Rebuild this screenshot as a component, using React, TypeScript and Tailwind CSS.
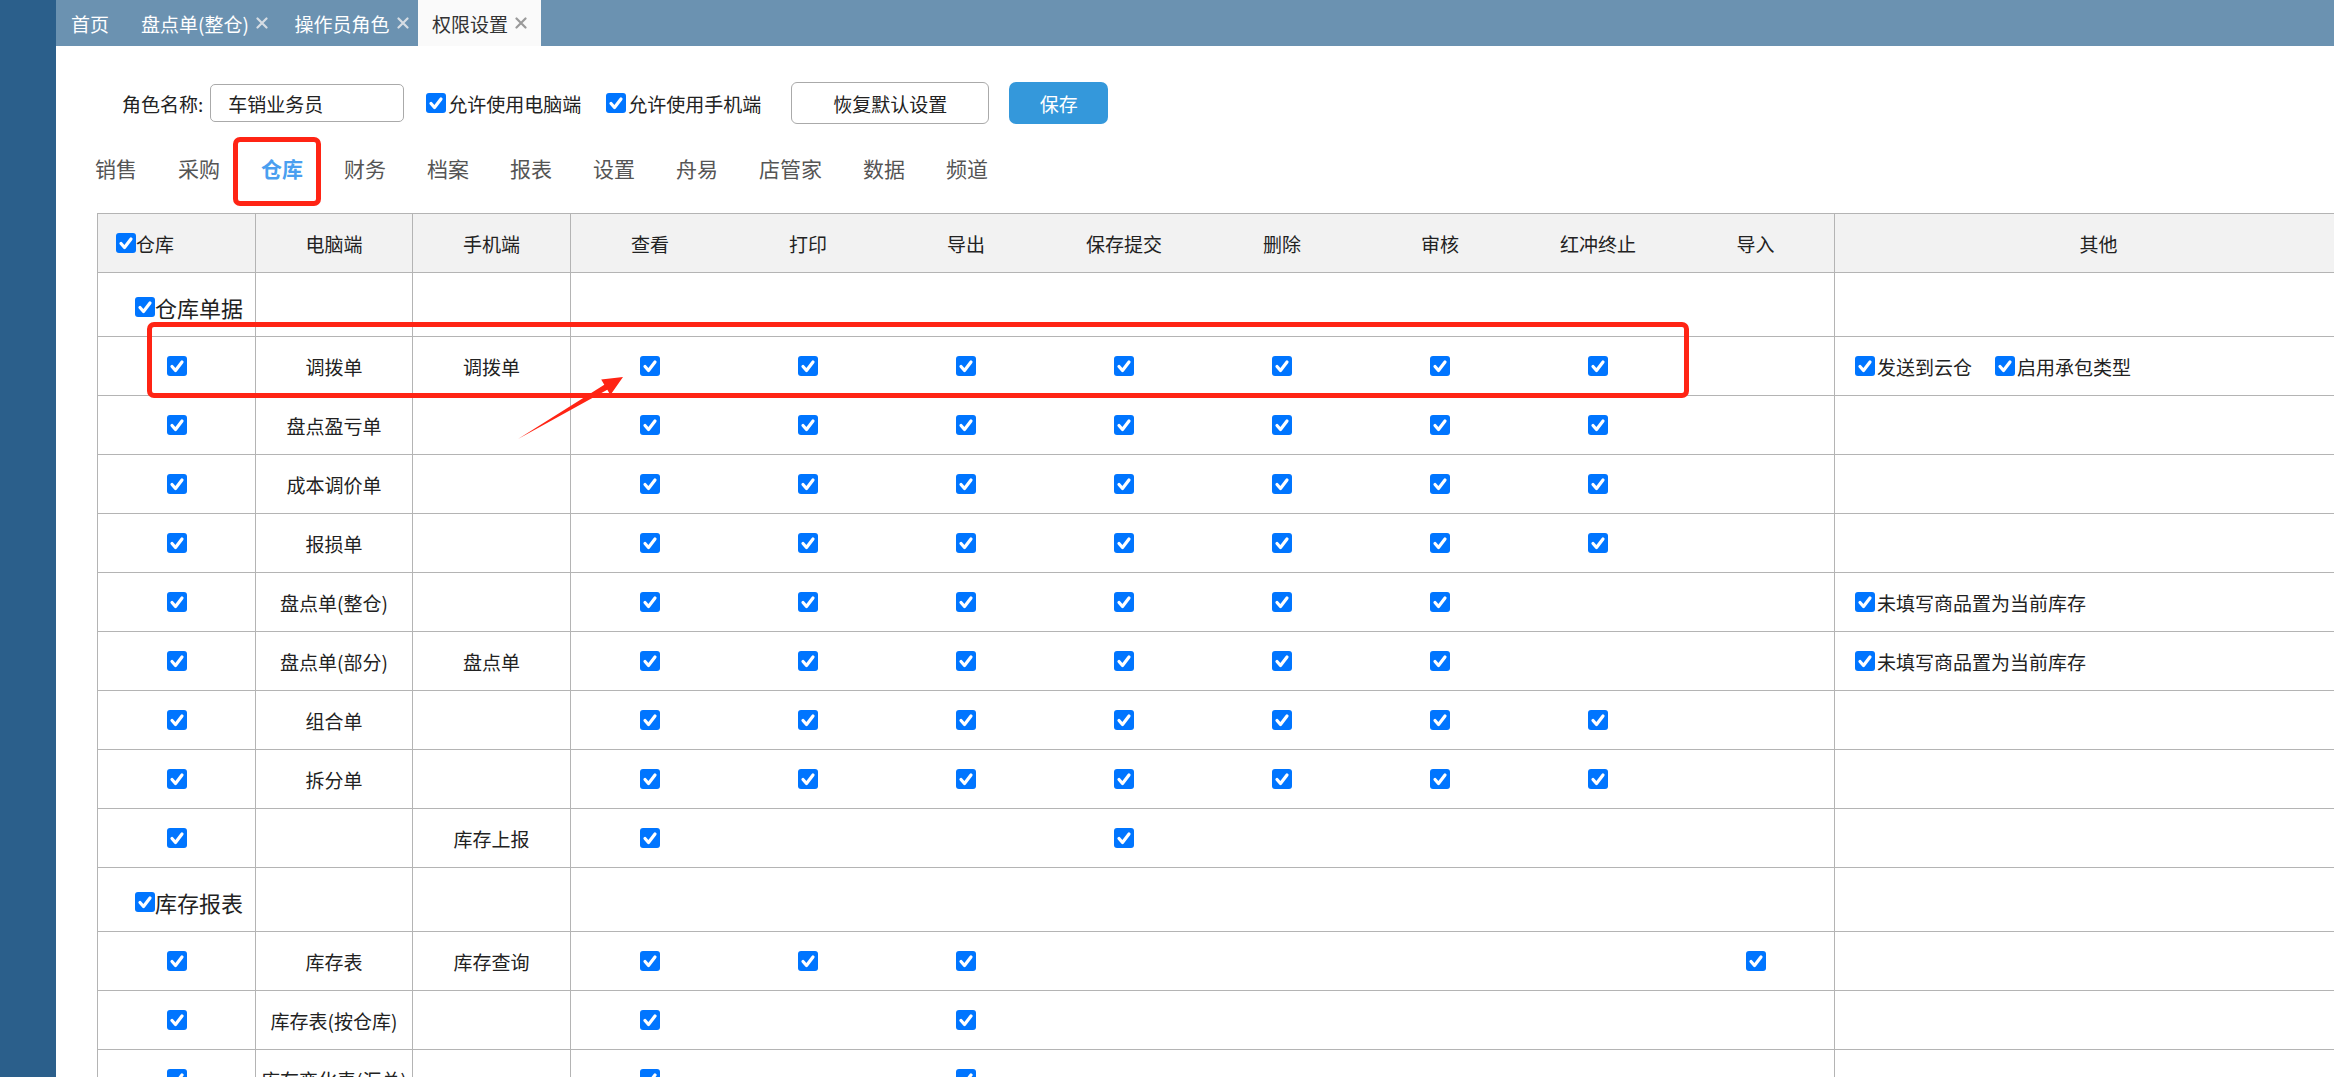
import React from 'react';

type Row = { pc: string; mobile: string; perms: string; other?: string[] };
type Group = { title: string; rows: Row[] };

const tabs = [
  { label: '首页', w: 'w-[68px]', close: false, active: false },
  { label: '盘点单(整仓)', w: 'w-[161px]', close: true, active: false },
  { label: '操作员角色', w: 'w-[133px]', close: true, active: false },
  { label: '权限设置', w: 'w-[123px]', close: true, active: true },
];

const navItems = ['销售', '采购', '仓库', '财务', '档案', '报表', '设置', '舟易', '店管家', '数据', '频道'];

const actions = ['查看', '打印', '导出', '保存提交', '删除', '审核', '红冲终止', '导入'];

const groups: Group[] = [
  {
    title: '仓库单据',
    rows: [
      { pc: '调拨单', mobile: '调拨单', perms: '11111110', other: ['发送到云仓', '启用承包类型'] },
      { pc: '盘点盈亏单', mobile: '', perms: '11111110' },
      { pc: '成本调价单', mobile: '', perms: '11111110' },
      { pc: '报损单', mobile: '', perms: '11111110' },
      { pc: '盘点单(整仓)', mobile: '', perms: '11111100', other: ['未填写商品置为当前库存'] },
      { pc: '盘点单(部分)', mobile: '盘点单', perms: '11111100', other: ['未填写商品置为当前库存'] },
      { pc: '组合单', mobile: '', perms: '11111110' },
      { pc: '拆分单', mobile: '', perms: '11111110' },
      { pc: '', mobile: '库存上报', perms: '10010000' },
    ],
  },
  {
    title: '库存报表',
    rows: [
      { pc: '库存表', mobile: '库存查询', perms: '11100001' },
      { pc: '库存表(按仓库)', mobile: '', perms: '10100000' },
      { pc: '库存变化表(汇总)', mobile: '', perms: '10100000' },
    ],
  },
];

function Check() {
  return (
    <span className="inline-flex h-5 w-5 shrink-0 items-center justify-center rounded-[3px] bg-[#0075ff]">
      <svg viewBox="0 0 20 20" className="h-5 w-5" fill="none" stroke="white" strokeWidth={3.2} strokeLinecap="round" strokeLinejoin="round">
        <path d="M5 10.5l3.5 4 6.5-8.5" />
      </svg>
    </span>
  );
}

function CloseX({ color }: { color: string }) {
  return (
    <svg viewBox="0 0 12 12" className="ml-[7px] h-[12px] w-[12px]" stroke={color} strokeWidth={2.2} strokeLinecap="round">
      <path d="M1.5 1.5l9 9M10.5 1.5l-9 9" />
    </svg>
  );
}

export default function App() {
  return (
    <div className="relative flex h-screen w-screen overflow-hidden bg-white font-['Noto_Sans_CJK_SC',sans-serif] text-[#222]">
      <aside className="w-[56px] shrink-0 bg-[#2b5f8b]" />

      <div className="flex min-w-0 flex-1 flex-col overflow-hidden">
        {/* tab bar */}
        <div className="flex h-[46px] shrink-0 bg-[#6b92b1]">
          {tabs.map((t) => (
            <div
              key={t.label}
              className={`flex ${t.w} items-center justify-center text-[19px] leading-none ${
                t.active ? 'bg-[#fafafa] text-[#333]' : 'text-white'
              }`}
            >
              <span>{t.label}</span>
              {t.close && <CloseX color={t.active ? '#9a9a9a' : '#d6dde4'} />}
            </div>
          ))}
        </div>

        <div className="flex-1 pl-[41px]">
          {/* role row */}
          <div className="ml-[25px] mt-[36px] flex h-[42px] items-center">
            <span className="text-[19px] leading-none">角色名称:</span>
            <div className="ml-[7px] flex h-[38px] w-[194px] items-center rounded-[5px] border border-[#aaa] pl-[17px] text-[19px] leading-none">
              车销业务员
            </div>
            <label className="ml-[22px] flex items-center">
              <Check />
              <span className="ml-[2px] text-[19px] leading-none">允许使用电脑端</span>
            </label>
            <label className="ml-[25px] flex items-center">
              <Check />
              <span className="ml-[2px] text-[19px] leading-none">允许使用手机端</span>
            </label>
            <button type="button" className="ml-[30px] flex h-[42px] w-[198px] items-center justify-center rounded-[6px] border border-[#aaa] bg-white text-[19px] leading-none">
              恢复默认设置
            </button>
            <button type="button" className="ml-[20px] flex h-[42px] w-[99px] items-center justify-center rounded-[7px] bg-[#3498db] text-[19px] leading-none text-white">
              保存
            </button>
          </div>

          {/* module nav */}
          <div className="-ml-[2px] mt-[24px] flex h-[40px] items-center gap-[41px]">
            {navItems.map((n) => (
              <span
                key={n}
                className={`text-[21px] leading-none ${n === '仓库' ? 'font-bold text-[#4a9ff0]' : 'text-[#555]'}`}
              >
                {n}
              </span>
            ))}
          </div>

          {/* permission table */}
          <div className="mt-[25px] w-[2266px] border-l border-[#b4b4b4] text-[19px] leading-none">
            <div className="flex h-[60px] border-y border-[#b4b4b4] bg-[#f2f2f2]">
              <div className="flex w-[158px] items-center border-r border-[#b4b4b4] pl-[18px]">
                <Check />
                <span>仓库</span>
              </div>
              <div className="flex w-[157px] items-center justify-center border-r border-[#b4b4b4]">电脑端</div>
              <div className="flex w-[158px] items-center justify-center border-r border-[#b4b4b4]">手机端</div>
              {actions.map((a, i) => (
                <div
                  key={a}
                  className={`flex w-[158px] items-center justify-center ${i === actions.length - 1 ? 'border-r border-[#b4b4b4]' : ''}`}
                >
                  {a}
                </div>
              ))}
              <div className="flex w-[528px] items-center justify-center border-r border-[#b4b4b4]">其他</div>
            </div>

            {groups.map((g) => (
              <React.Fragment key={g.title}>
                <div className="flex h-[64px] border-b border-[#b4b4b4]">
                  <div className="flex w-[158px] items-center border-r border-[#b4b4b4] pl-[37px] pt-[5px]">
                    <Check />
                    <span className="text-[22px]">{g.title}</span>
                  </div>
                  <div className="w-[157px] border-r border-[#b4b4b4]" />
                  <div className="w-[158px] border-r border-[#b4b4b4]" />
                  <div className="w-[1264px] border-r border-[#b4b4b4]" />
                  <div className="w-[528px] border-r border-[#b4b4b4]" />
                </div>

                {g.rows.map((r, ri) => (
                  <div key={ri} className="flex h-[59px] border-b border-[#b4b4b4]">
                    <div className="flex w-[158px] items-center justify-center border-r border-[#b4b4b4]">
                      <Check />
                    </div>
                    <div className="flex w-[157px] items-center justify-center whitespace-nowrap border-r border-[#b4b4b4]">
                      {r.pc}
                    </div>
                    <div className="flex w-[158px] items-center justify-center border-r border-[#b4b4b4]">{r.mobile}</div>
                    {actions.map((a, i) => (
                      <div
                        key={a}
                        className={`flex w-[158px] items-center justify-center ${i === actions.length - 1 ? 'border-r border-[#b4b4b4]' : ''}`}
                      >
                        {r.perms[i] === '1' && <Check />}
                      </div>
                    ))}
                    <div className="flex w-[528px] items-center gap-[23px] border-r border-[#b4b4b4] pl-[20px]">
                      {r.other?.map((o) => (
                        <span key={o} className="flex items-center">
                          <Check />
                          <span className="ml-[2px]">{o}</span>
                        </span>
                      ))}
                    </div>
                  </div>
                ))}
              </React.Fragment>
            ))}
          </div>
        </div>
      </div>

      {/* annotations drawn over the screenshot */}
      <div className="pointer-events-none absolute left-[233px] top-[137px] h-[69px] w-[88px] rounded-[7px] border-[5px] border-[#ff2414]" />
      <div className="pointer-events-none absolute left-[147px] top-[322px] h-[76px] w-[1542px] rounded-[7px] border-[5px] border-[#ff2414]" />
      <svg className="pointer-events-none absolute left-0 top-0 h-[1077px] w-[2334px]" viewBox="0 0 2334 1077">
        <polygon points="518,439 607.3,389.8 610.4,395 623,377 601.2,379.5 604.3,384.7" fill="#ff2414" />
      </svg>
    </div>
  );
}
